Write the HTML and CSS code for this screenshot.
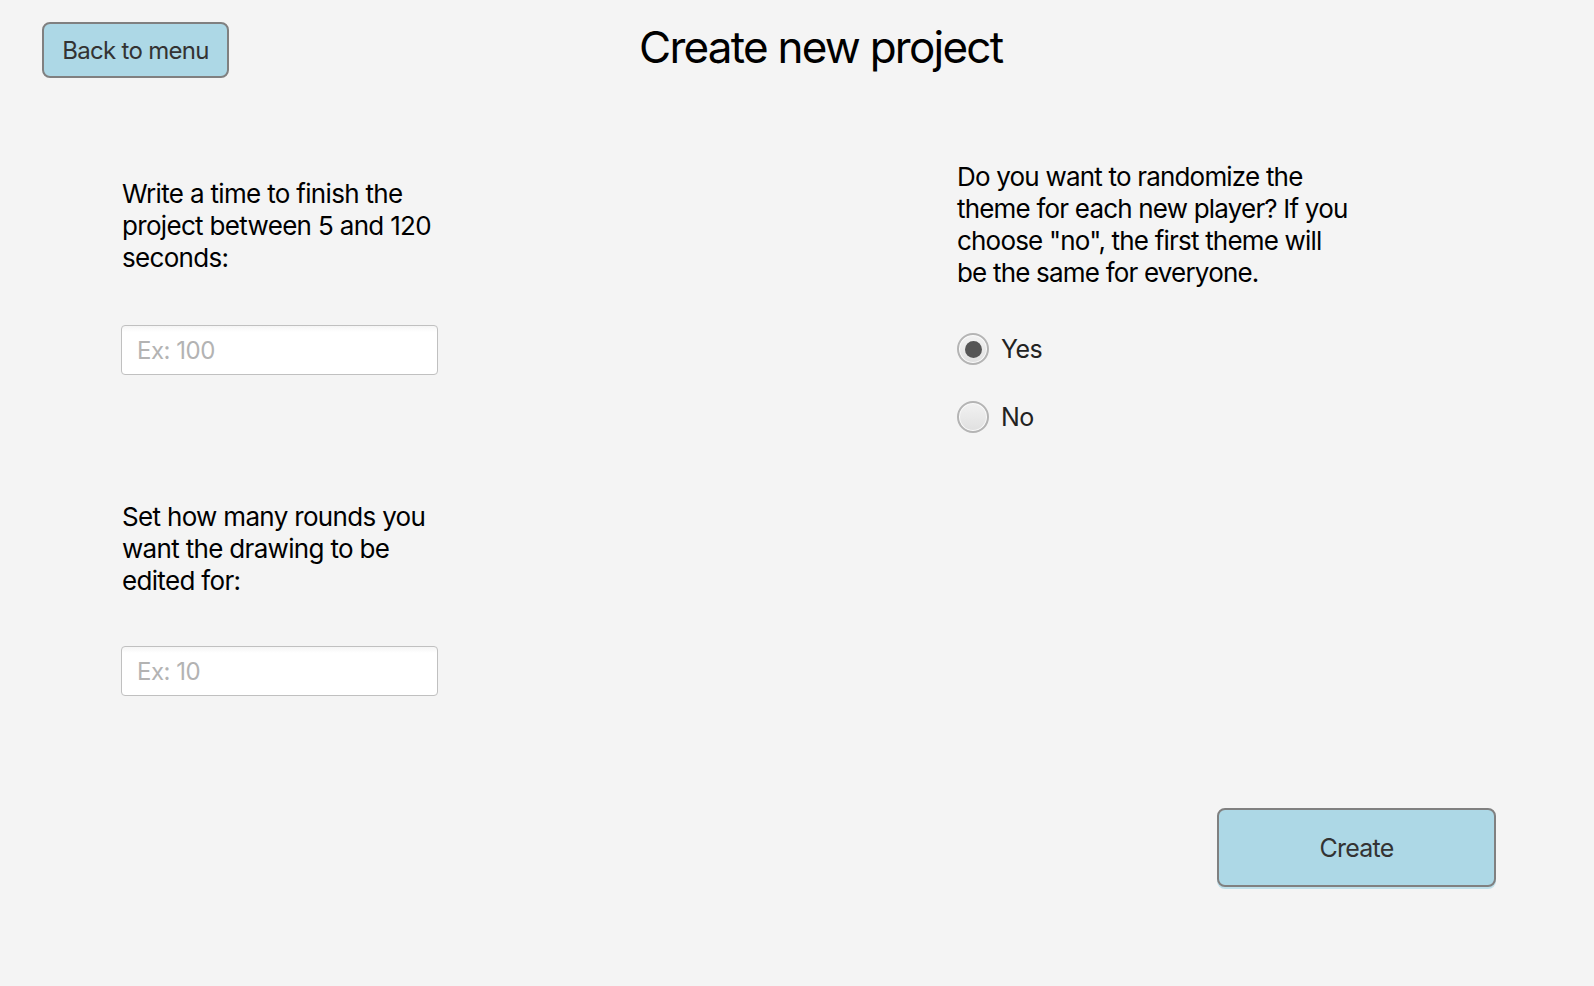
FILE: index.html
```html
<!DOCTYPE html>
<html lang="en">
<head>
<meta charset="utf-8">
<title>Create new project</title>
<link rel="stylesheet" href="styles.css">
</head>
<body>
<div class="page">
  <header class="header">
    <button class="btn btn-back" type="button">Back to menu</button>
    <h1 class="title">Create new project</h1>
  </header>
  <main class="main">
    <section class="col col-left">
      <div class="field">
        <p class="label">Write a time to finish the<br>project between 5 and 120<br>seconds:</p>
        <input class="input" type="text" placeholder="Ex: 100">
      </div>
      <div class="field field-second">
        <p class="label">Set how many rounds you<br>want the drawing to be<br>edited for:</p>
        <input class="input" type="text" placeholder="Ex: 10">
      </div>
    </section>
    <section class="col col-right">
      <p class="label">Do you want to randomize the<br>theme for each new player? If you<br>choose "no", the first theme will<br>be the same for everyone.</p>
      <div class="radios">
        <label class="radio">
          <span class="radio-dot checked"></span>
          <span class="radio-text">Yes</span>
        </label>
        <label class="radio">
          <span class="radio-dot"></span>
          <span class="radio-text">No</span>
        </label>
      </div>
    </section>
  </main>
  <footer class="footer">
    <button class="btn btn-create" type="button">Create</button>
  </footer>
</div>
</body>
</html>
```

FILE: styles.css
```css
* { box-sizing: border-box; }
html, body {
  margin: 0;
  padding: 0;
  background: #f4f4f4;
}
body {
  font-family: Inter, "Liberation Sans", sans-serif;
  color: #000;
}
.page {
  width: 1594px;
  height: 986px;
  display: flex;
  flex-direction: column;
}
.header {
  display: flex;
  align-items: flex-start;
  padding: 22px 0 0 42px;
}
.btn {
  font-family: Inter, "Liberation Sans", sans-serif;
  background: #add8e6;
  border: 2px solid #808080;
  border-radius: 8px;
  color: #333;
  letter-spacing: -0.03em;
  padding: 0;
  cursor: pointer;
}
.btn-back {
  width: 187px;
  height: 56px;
  font-size: 24px;
}
.title {
  margin: -1px 0 0 410px;
  font-size: 44px;
  line-height: 52px;
  font-weight: 400;
  letter-spacing: -0.04em;
}
.main {
  display: grid;
  grid-template-columns: 836px auto;
  padding-left: 121px;
}
.col-left {
  padding-top: 100px;
}
.col-right {
  padding-top: 83px;
}
.label {
  margin: 0;
  font-size: 26px;
  line-height: 32px;
  letter-spacing: -0.026em;
  padding-left: 1px;
}
.col-right .label {
  padding-left: 0;
  letter-spacing: -0.031em;
}
.field-second {
  margin-top: 126px;
}
.input {
  display: block;
  margin-top: 51px;
  width: 317px;
  height: 50px;
  border: 1px solid #c0c0c0;
  border-radius: 4px;
  background: linear-gradient(#f5f5f5, #ffffff 6px);
  font-family: Inter, "Liberation Sans", sans-serif;
  font-size: 24px;
  letter-spacing: -0.02em;
  padding: 0 0 0 15px;
  color: #333;
  outline: none;
}
.field-second .input {
  margin-top: 49px;
}
.input::placeholder {
  color: #b3b3b3;
}
.radios {
  display: flex;
  flex-direction: column;
  gap: 36px;
  margin-top: 44px;
}
.radio {
  display: flex;
  align-items: center;
  gap: 12px;
  height: 32px;
}
.radio-dot {
  width: 32px;
  height: 32px;
  border-radius: 50%;
  border: 2px solid #b4b4b4;
  background: linear-gradient(#f2f2f2, #e0e0e0);
  box-shadow: inset 0 0 0 1px #fafafa;
  display: flex;
  align-items: center;
  justify-content: center;
}
.radio-dot.checked::after {
  content: "";
  width: 17px;
  height: 17px;
  border-radius: 50%;
  background: #555;
}
.radio-text {
  font-size: 25px;
  letter-spacing: -0.025em;
  color: #222;
}
.footer {
  display: flex;
  justify-content: flex-end;
  padding-right: 98px;
  margin-top: 112px;
}
.btn-create {
  width: 279px;
  height: 79px;
  font-size: 25px;
  box-shadow: 0 2px 0 #bfe0ea;
}
```
